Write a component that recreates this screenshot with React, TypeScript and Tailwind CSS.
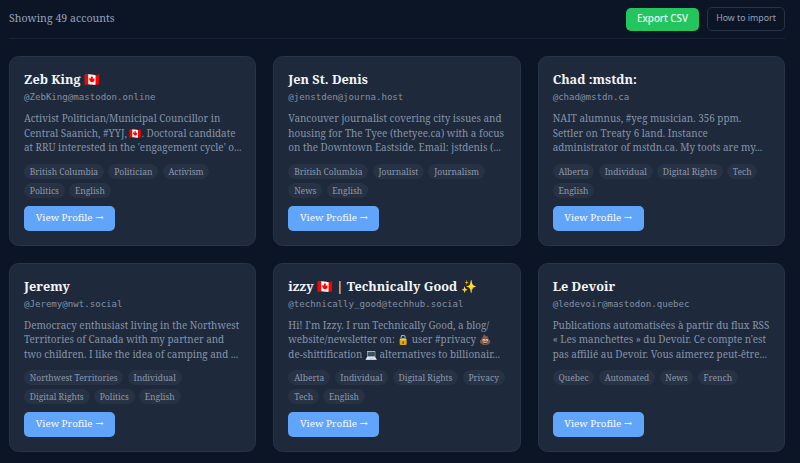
const accounts = [
  {
    name: "Zeb King 🇨🇦",
    handle: "@ZebKing@mastodon.online",
    bio: ["Activist Politician/Municipal Councillor in", "Central Saanich, #YYJ, 🇨🇦. Doctoral candidate", "at RRU interested in the 'engagement cycle' o..."],
    tags: ["British Columbia", "Politician", "Activism", "Politics", "English"],
  },
  {
    name: "Jen St. Denis",
    handle: "@jenstden@journa.host",
    bio: ["Vancouver journalist covering city issues and", "housing for The Tyee (thetyee.ca) with a focus", "on the Downtown Eastside. Email: jstdenis (..."],
    tags: ["British Columbia", "Journalist", "Journalism", "News", "English"],
  },
  {
    name: "Chad :mstdn:",
    handle: "@chad@mstdn.ca",
    bio: ["NAIT alumnus, #yeg musician. 356 ppm.", "Settler on Treaty 6 land. Instance", "administrator of mstdn.ca. My toots are my..."],
    tags: ["Alberta", "Individual", "Digital Rights", "Tech", "English"],
  },
  {
    name: "Jeremy",
    handle: "@Jeremy@nwt.social",
    bio: ["Democracy enthusiast living in the Northwest", "Territories of Canada with my partner and", "two children. I like the idea of camping and ..."],
    tags: ["Northwest Territories", "Individual", "Digital Rights", "Politics", "English"],
  },
  {
    name: "izzy 🇨🇦 | Technically Good ✨",
    handle: "@technically_good@techhub.social",
    bio: ["Hi! I'm Izzy. I run Technically Good, a blog/", "website/newsletter on: 🔒 user #privacy 💩", "de-shittification 💻 alternatives to billionair..."],
    tags: ["Alberta", "Individual", "Digital Rights", "Privacy", "Tech", "English"],
  },
  {
    name: "Le Devoir",
    handle: "@ledevoir@mastodon.quebec",
    bio: ["Publications automatisées à partir du flux RSS", "« Les manchettes » du Devoir. Ce compte n'est", "pas affilié au Devoir. Vous aimerez peut-être..."],
    tags: ["Quebec", "Automated", "News", "French"],
  },
];

function AccountCard({ account }: { account: (typeof accounts)[number] }) {
  return (
    <div className="flex flex-col rounded-[9.6px] border border-[#283447] bg-[#1e293b] px-[14px] pt-[13.1px] pb-[14px]">
      <h3 className="text-[12.7px] leading-[18px] font-bold text-[#f1f5f9]">{account.name}</h3>
      <p className="mt-[3px] font-['DejaVu_Sans_Mono',monospace] text-[9.1px] leading-[12px] text-[#8290a5]">
        {account.handle}
      </p>
      <p className="mt-[8px] text-[9.9px] leading-[14.6px] text-[#8593a9] whitespace-nowrap">
        {account.bio.map((line) => (
          <span key={line} className="block">
            {line}
          </span>
        ))}
      </p>
      <div className="mt-[8.9px] flex flex-1 flex-wrap content-start gap-x-[4.4px] gap-y-[4px]">
        {account.tags.map((tag) => (
          <span key={tag} className="rounded-full bg-[#273244] px-[5.8px] py-[1px] text-[8.5px] leading-[13px] text-[#8b98ad]">
            {tag}
          </span>
        ))}
      </div>
      <button className="h-[25px] w-[91px] shrink-0 rounded-[5px] bg-[#60a5fa] text-[9.8px] text-[#f8fafc]">
        View Profile →
      </button>
    </div>
  );
}

export default function App() {
  return (
    <main className="h-[463px] overflow-hidden bg-[#0c1526] pl-[9px] pr-[15px] font-['Noto_Serif','DejaVu_Serif',serif]">
      <div className="flex h-[39px] items-center justify-between border-b border-[#182234]">
        <span className="text-[10.6px] text-[#94a3b8]">Showing 49 accounts</span>
        <div className="flex items-center gap-[8px] font-['Noto_Sans',sans-serif]">
          <button className="h-[23px] w-[73px] rounded-[5px] bg-[#22c55e] text-[9.8px] font-medium text-[#f1f5f9]">
            Export CSV
          </button>
          <button className="h-[24px] w-[78px] rounded-[5px] border border-[#263247] text-[8.8px] text-[#94a3b8]">
            How to import
          </button>
        </div>
      </div>
      <div className="mt-[17.2px] grid grid-cols-3 gap-x-[17px] gap-y-[16.8px] [grid-auto-rows:189.6px]">
        {accounts.map((account) => (
          <AccountCard key={account.handle} account={account} />
        ))}
      </div>
    </main>
  );
}
